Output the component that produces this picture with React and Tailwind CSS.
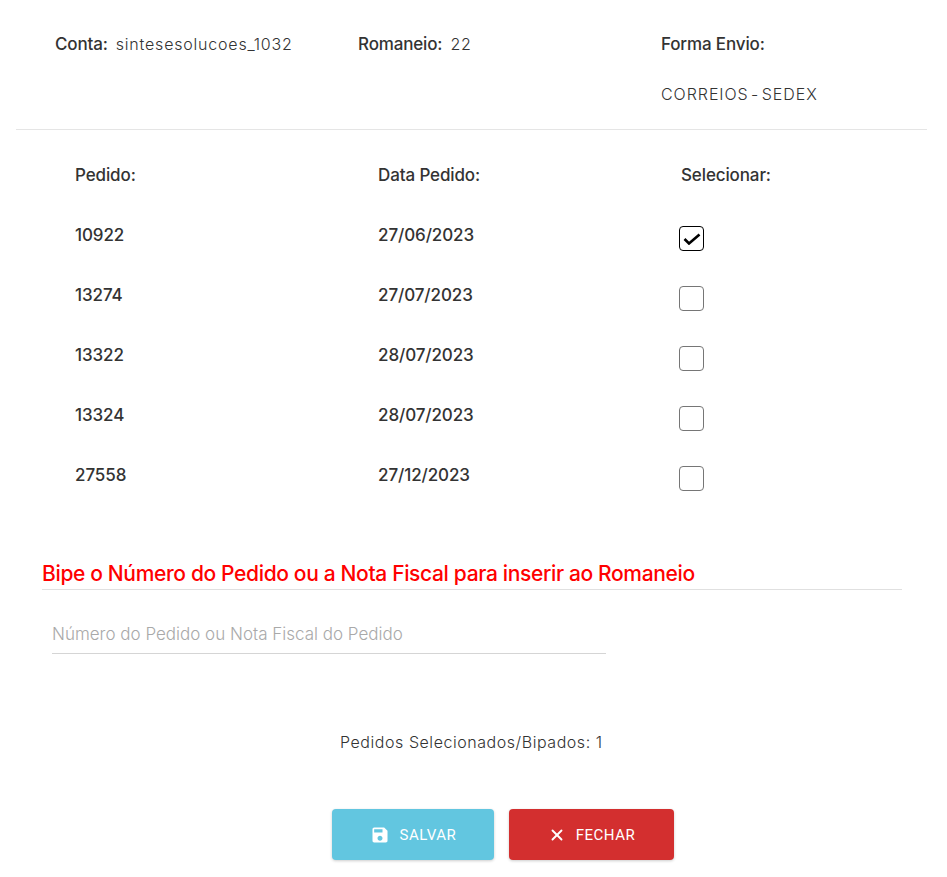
import React from 'react';
import { X } from 'lucide-react';

const pedidos = [
  { id: '10922', data: '27/06/2023', checked: true },
  { id: '13274', data: '27/07/2023' },
  { id: '13322', data: '28/07/2023' },
  { id: '13324', data: '28/07/2023' },
  { id: '27558', data: '27/12/2023' },
];

const SaveIcon = () => (
  <svg width="20" height="20" viewBox="0 0 24 24" fill="currentColor">
    <path d="M17 3H5c-1.11 0-2 .9-2 2v14c0 1.1.89 2 2 2h14c1.1 0 2-.9 2-2V7l-4-4zm-5 16c-1.66 0-3-1.34-3-3s1.34-3 3-3 3 1.34 3 3-1.34 3-3 3zm3-10H5V5h10v4z" />
  </svg>
);

export default function App() {
  return (
    <div className="w-[947px] h-[877px] bg-white overflow-hidden text-[#333] font-['Inter',sans-serif]">
      {/* Cabecalho */}
      <div className="mx-[16px] w-[911px] h-[130px] border-b border-[#e5e5e5] pl-[39px] pt-[33px] grid grid-cols-[303px_303px_1fr] text-[16px] leading-[22px]">
        <div>
          <span className="font-medium text-[17px] mr-[8px] tracking-[-0.15px]">Conta:</span>
          <span className="font-light tracking-[0.8px]">sintesesolucoes_1032</span>
        </div>
        <div>
          <span className="font-medium text-[17px] mr-[8px] tracking-[-0.15px]">Romaneio:</span>
          <span className="font-light tracking-[0.8px]">22</span>
        </div>
        <div>
          <div className="font-medium text-[17px] tracking-[-0.15px]">Forma Envio:</div>
          <div className="font-light mt-[28px] tracking-[0.95px] [word-spacing:-3px]">CORREIOS - SEDEX</div>
        </div>
      </div>

      {/* Lista de pedidos */}
      <div className="pl-[75px] pt-[34px]">
        <div className="grid grid-cols-[303px_303px_1fr] h-[60px] font-medium text-[17px] leading-[22px] tracking-[-0.12px]">
          <div>Pedido:</div>
          <div>Data Pedido:</div>
          <div>Selecionar:</div>
        </div>
        {pedidos.map((p) => (
          <div key={p.id} className="grid grid-cols-[303px_303px_1fr] h-[60px] font-medium text-[17px] leading-[22px] tracking-[-0.1px]">
            <div>{p.id}</div>
            <div>{p.data}</div>
            <div>
              <div className={`-ml-[2px] mt-[2px] w-[25px] h-[25px] rounded-[4px] border flex items-center justify-center ${p.checked ? 'border-black border-[1.5px]' : 'border-[#767676]'}`}>
                {p.checked && (
                  <svg width="18" height="12" viewBox="0 0 18 12" fill="none" stroke="black" strokeWidth="2.6">
                    <path d="M1.5 6 L6 10.5 L16.5 1.5" />
                  </svg>
                )}
              </div>
            </div>
          </div>
        ))}
      </div>

      {/* Bipagem */}
      <div className="mt-[36px] ml-[42px] w-[860px] h-[30px] border-b border-[#e0e0e0] text-[#ff0000] text-[21px] leading-[28px] font-medium tracking-[-0.35px]">
        Bipe o Número do Pedido ou a Nota Fiscal para inserir ao Romaneio
      </div>
      <div className="mt-[30px] ml-[52px] w-[554px] h-[34px] border-b border-[#d5d5d5] text-[#a9a9a9] text-[17px] leading-[28px] font-light">
        Número do Pedido ou Nota Fiscal do Pedido
      </div>

      <div className="mt-[76px] ml-[340px] text-[16px] leading-[24px] font-light tracking-[0.55px]">
        Pedidos Selecionados/Bipados: 1
      </div>

      {/* Botoes */}
      <div className="mt-[55px] ml-[332px] flex gap-[15px] text-white text-[15px] font-['Roboto',sans-serif] tracking-[0.55px]">
        <button className="w-[162px] h-[51px] rounded-[4px] bg-[#62c6e0] shadow-[0_1px_3px_rgba(0,0,0,0.2)] flex items-center justify-center gap-[10px]">
          <SaveIcon />
          <span className="pt-[1px]">SALVAR</span>
        </button>
        <button className="w-[165px] h-[51px] rounded-[4px] bg-[#d32f2f] shadow-[0_1px_3px_rgba(0,0,0,0.2)] flex items-center justify-center gap-[10px]">
          <X size={18} strokeWidth={2.5} />
          <span className="pt-[1px]">FECHAR</span>
        </button>
      </div>
    </div>
  );
}
